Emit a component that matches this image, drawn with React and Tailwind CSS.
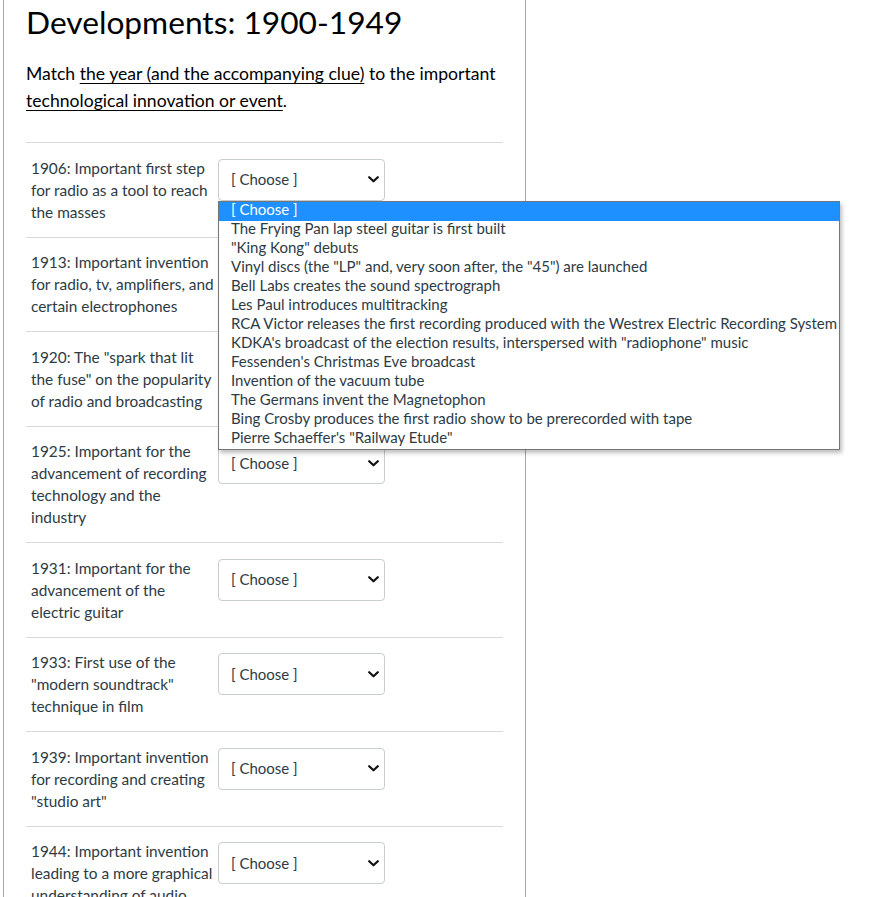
const options = [
  '[ Choose ]',
  'The Frying Pan lap steel guitar is first built',
  '"King Kong" debuts',
  'Vinyl discs (the "LP" and, very soon after, the "45") are launched',
  'Bell Labs creates the sound spectrograph',
  'Les Paul introduces multitracking',
  'RCA Victor releases the first recording produced with the Westrex Electric Recording System',
  'KDKA\'s broadcast of the election results, interspersed with "radiophone" music',
  "Fessenden's Christmas Eve broadcast",
  'Invention of the vacuum tube',
  'The Germans invent the Magnetophon',
  'Bing Crosby produces the first radio show to be prerecorded with tape',
  'Pierre Schaeffer\'s "Railway Etude"',
]

const questions = [
  '1906: Important first step for radio as a tool to reach the masses',
  '1913: Important invention for radio, tv, amplifiers, and certain electrophones',
  '1920: The "spark that lit the fuse" on the popularity of radio and broadcasting',
  '1925: Important for the advancement of recording technology and the industry',
  '1931: Important for the advancement of the electric guitar',
  '1933: First use of the "modern soundtrack" technique in film',
  '1939: Important invention for recording and creating "studio art"',
  '1944: Important invention leading to a more graphical understanding of audio',
]

const Chevron = () => (
  <svg width="11" height="7" viewBox="0 0 11 7" className="shrink-0">
    <path d="M1.2 1.2 L5.5 5.3 L9.8 1.2" fill="none" stroke="#111" strokeWidth="2.2" strokeLinecap="round" strokeLinejoin="round" />
  </svg>
)

const FakeSelect = ({ open }) => (
  <div className="relative self-start mt-[2px]">
    <div className="flex items-center justify-between w-[167px] h-[42px] pl-[12px] pr-[5px] border border-[#c7cdd1] rounded-[4px] bg-white text-[15px] text-[#2d3b45]">
      <span className="-mt-[1px]">[ Choose ]</span>
      <Chevron />
    </div>
    {open && (
      <div className="absolute left-0 top-[42px] z-10 w-max bg-white border border-[#767676] shadow-[2px_3px_4px_rgba(0,0,0,0.25)] text-[15px] text-[#2d3b45]">
        {options.map((opt, i) => (
          <div
            key={i}
            className={`pl-[12px] pr-[2px] h-[19px] leading-[15px] whitespace-nowrap ${i === 0 ? 'bg-[#1e90ff] text-white' : ''}`}
          >
            {opt}
          </div>
        ))}
      </div>
    )}
  </div>
)

export default function App() {
  return (
    <div className="w-[880px] h-[897px] overflow-hidden bg-white font-['Lato',sans-serif] text-[#2d3b45]">
      <div className="ml-[3px] w-[523px] min-h-[897px] border-l border-r border-[#a8a8a8] pl-[22px] pr-[22px]">
        <h1 className="pt-[2px] text-[31.7px] leading-[40px] text-black">Developments: 1900-1949</h1>
        <p className="mt-[18px] text-[17.6px] leading-[27px] text-black whitespace-nowrap">
          Match <span className="underline underline-offset-[3px]">the year (and the accompanying clue)</span> to the important
          <br />
          <span className="underline underline-offset-[3px]">technological innovation or event</span>.
        </p>
        <div className="mt-[28px] border-t border-[#d9d9d9]">
          {questions.map((q, i) => (
            <div key={i} className="flex py-[13.75px] border-b border-[#d9d9d9]">
              <div className="w-[192px] shrink-0 pl-[5px] text-[15.4px] leading-[22px]">{q}</div>
              <FakeSelect open={i === 0} />
            </div>
          ))}
        </div>
      </div>
    </div>
  )
}
